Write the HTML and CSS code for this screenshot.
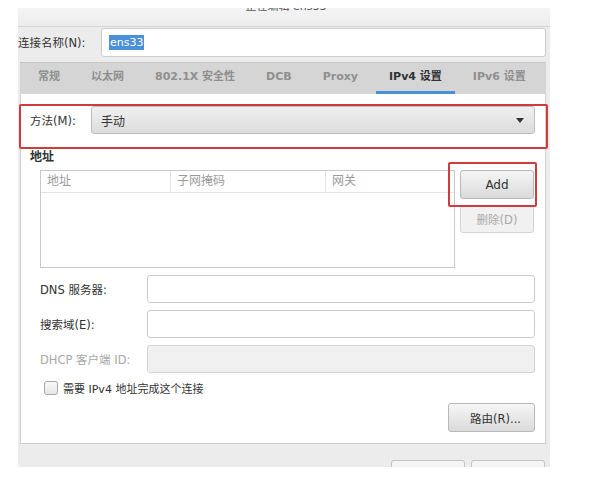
FILE: index.html
```html
<!DOCTYPE html>
<html>
<head>
<meta charset="utf-8">
<link rel="stylesheet" href="styles.css">
</head>
<body>
<div class="dialog">
  <div class="titlebar"><span class="title">正在编辑 ens33</span></div>
  <div class="name-row">
    <span class="name-label">连接名称(N):</span>
    <div class="name-input"><span class="sel">ens33</span></div>
  </div>
  <div class="tabs">
    <span class="tab">常规</span>
    <span class="tab">以太网</span>
    <span class="tab">802.1X 安全性</span>
    <span class="tab">DCB</span>
    <span class="tab">Proxy</span>
    <span class="tab active">IPv4 设置</span>
    <span class="tab">IPv6 设置</span>
  </div>
  <div class="panel">
    <div class="method-row">
      <span class="method-label">方法(M):</span>
      <div class="combo"><span>手动</span><span class="arrow"></span></div>
    </div>
    <div class="section-title">地址</div>
    <div class="addr-area">
      <div class="table">
        <div class="thead">
          <span class="col c1">地址</span>
          <span class="col c2">子网掩码</span>
          <span class="col c3">网关</span>
        </div>
      </div>
      <div class="addr-buttons">
        <div class="btn add">Add</div>
        <div class="btn del">删除(D)</div>
      </div>
    </div>
    <div class="form-row">
      <span class="form-label">DNS 服务器:</span>
      <div class="entry"></div>
    </div>
    <div class="form-row">
      <span class="form-label">搜索域(E):</span>
      <div class="entry"></div>
    </div>
    <div class="form-row">
      <span class="form-label disabled">DHCP 客户端 ID:</span>
      <div class="entry dis"></div>
    </div>
    <div class="check-row">
      <span class="checkbox"></span>
      <span class="check-text">需要 IPv4 地址完成这个连接</span>
    </div>
    <div class="route-row">
      <div class="btn route">路由(R)...</div>
    </div>
  </div>
  <div class="footer">
    <div class="btn foot"></div>
    <div class="btn foot"></div>
  </div>
  <div class="mark mark-method"></div>
  <div class="mark mark-add"></div>
</div>
</body>
</html>
```

FILE: styles.css
```css
* { box-sizing: border-box; }
html, body { margin: 0; padding: 0; background: #ffffff; }
body {
  font-family: "DejaVu Sans", "Noto Sans CJK SC", sans-serif;
  font-size: 12px;
  color: #2e3436;
}
.dialog {
  position: relative;
  margin: 8px 0 0 18px;
  width: 532px;
  height: 459px;
  background: #ececec;
  overflow: hidden;
}
.titlebar {
  height: 19px;
  background: linear-gradient(#f4f4f4, #ececec);
  border-bottom: 1px solid #d6d6d6;
  text-align: center;
  overflow: hidden;
}
.title {
  display: block;
  margin-top: -9px;
  line-height: 16px;
  font-size: 11px;
  color: #5a5a5a;
  padding-left: 4px;
}
.name-row {
  display: flex;
  align-items: center;
  height: 30px;
}
.name-label {
  width: 83px;
  color: #333;
  font-size: 11.5px;
}
.name-input {
  width: 445px;
  height: 29px;
  background: #fff;
  border: 1px solid #cdcdcd;
  border-radius: 3px;
  display: flex;
  align-items: center;
  padding-left: 7px;
}
.sel {
  background: #4a90d9;
  color: #fff;
  font-size: 11px;
  line-height: 15px;
  padding: 0 1px;
}
.tabs {
  margin: 5px 0 0 2px;
  width: 526px;
  height: 32px;
  background: #d5d5d5;
  border-top: 1px solid #c6c6c6;
  display: flex;
  padding-left: 5px;
  gap: 5px;
}
.tab {
  padding: 0 13px;
  line-height: 28px;
  font-size: 11px;
  font-weight: bold;
  color: #8f8f8f;
  border-bottom: 3px solid transparent;
  white-space: nowrap;
}
.tab.active {
  color: #2e3436;
  border-bottom-color: #4a90d9;
}
.panel {
  margin-left: 2px;
  width: 526px;
  height: 350px;
  background: #fff;
  border: 1px solid #d0d0d0;
  border-top: none;
  padding: 12px 10px 0 9px;
}
.method-row {
  display: flex;
  align-items: center;
  height: 28px;
}
.method-label {
  width: 61px;
  color: #333;
  font-size: 11.5px;
}
.combo {
  width: 444px;
  height: 28px;
  border: 1px solid #bdbdbd;
  border-radius: 3px;
  background: linear-gradient(#f0f0f0, #dcdcdc);
  display: flex;
  align-items: center;
  justify-content: space-between;
  padding: 0 10px 0 9px;
  color: #333;
}
.arrow {
  width: 0;
  height: 0;
  border-left: 4px solid transparent;
  border-right: 4px solid transparent;
  border-top: 5px solid #333;
}
.section-title {
  margin-top: 15px;
  line-height: 16px;
  font-weight: bold;
  color: #2e3436;
}
.addr-area {
  display: flex;
  margin: 5px 0 0 10px;
  gap: 5px;
  align-items: flex-start;
}
.table {
  width: 415px;
  height: 98px;
  border: 1px solid #c8c8c8;
  background: #fff;
}
.thead {
  display: flex;
  height: 22px;
  border-bottom: 1px solid #e4e4e4;
}
.col {
  color: #9a9a9a;
  line-height: 21px;
  padding-left: 6px;
}
.c1 { width: 130px; border-right: 1px solid #e4e4e4; }
.c2 { width: 155px; border-right: 1px solid #e4e4e4; }
.c3 { flex: 1; }
.addr-buttons {
  display: flex;
  flex-direction: column;
  gap: 6px;
}
.btn {
  border: 1px solid #b8b8b8;
  border-radius: 3px;
  background: linear-gradient(#f6f6f6, #dadada);
  display: flex;
  align-items: center;
  justify-content: center;
  color: #333;
}
.add { width: 74px; height: 29px; }
.del {
  width: 74px;
  height: 28px;
  background: #f1f1f1;
  border-color: #d4d4d4;
  color: #a8a8a8;
  font-size: 11.5px;
}
.form-row {
  display: flex;
  align-items: center;
  margin: 7px 0 0 10px;
  height: 28px;
}
.form-label {
  width: 107px;
  color: #333;
  font-size: 11.5px;
}
.form-label.disabled { color: #a8a8a8; }
.entry {
  width: 388px;
  height: 28px;
  background: #fff;
  border: 1px solid #cbcbcb;
  border-radius: 3px;
}
.entry.dis {
  background: #f0f0f0;
  border-color: #d4d4d4;
}
.check-row {
  display: flex;
  align-items: center;
  margin: 8px 0 0 14px;
  height: 13px;
}
.checkbox {
  width: 14px;
  height: 14px;
  border: 1px solid #a6a6a6;
  border-radius: 3px;
  background: linear-gradient(#fafafa, #e6e6e6);
  margin-right: 5px;
}
.check-text { color: #333; font-size: 11px; }
.route-row {
  display: flex;
  justify-content: flex-end;
  margin-top: 9px;
}
.route {
  width: 87px;
  height: 29px;
  padding-left: 8px;
  font-size: 11.5px;
}
.footer {
  display: flex;
  justify-content: flex-end;
  gap: 6px;
  padding: 16px 5px 0 0;
}
.foot {
  width: 74px;
  height: 26px;
  background: linear-gradient(#f6f6f6, #e6e6e6);
  border-color: #c4c4c4;
}
.mark {
  position: absolute;
  border: 2px solid #d23b3b;
  border-radius: 2px;
}
.mark-method { left: 1px; top: 96px; width: 529px; height: 45px; }
.mark-add { left: 430px; top: 154px; width: 89px; height: 45px; }
```
